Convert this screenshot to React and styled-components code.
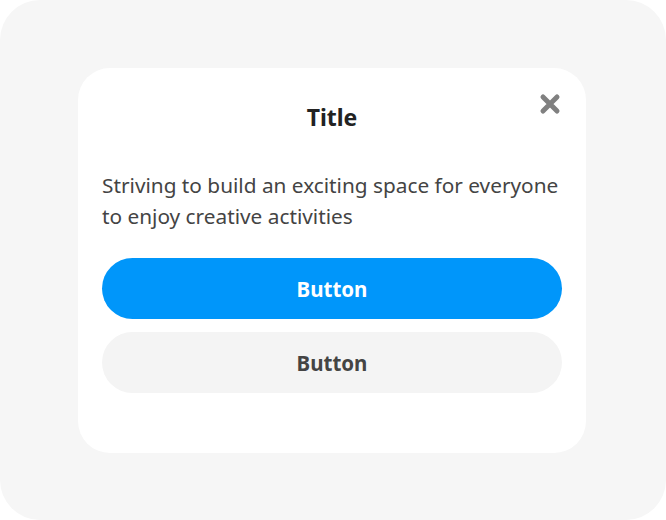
import React from "react";
import styled, { createGlobalStyle } from "styled-components";

const Global = createGlobalStyle`
  html, body {
    margin: 0;
    padding: 0;
    background: #ffffff;
  }
  * {
    box-sizing: border-box;
  }
`;

const Stage = styled.div`
  width: 666px;
  height: 520px;
  background: #f6f6f6;
  border-radius: 40px;
  padding: 68px 80px 67px 78px;
  font-family: "Noto Sans", "Open Sans", sans-serif;
`;

const Dialog = styled.div`
  width: 508px;
  height: 385px;
  background: #ffffff;
  border-radius: 32px;
  padding: 24px 24px 0;
  display: flex;
  flex-direction: column;
`;

const Header = styled.div`
  position: relative;
  height: 50px;
  display: flex;
  align-items: center;
  justify-content: center;
`;

const Title = styled.h2`
  margin: 0;
  font-size: 23px;
  font-weight: 700;
  color: #222222;
`;

const Close = styled.button`
  position: absolute;
  right: -1px;
  top: -1px;
  width: 26px;
  height: 26px;
  padding: 0;
  border: none;
  background: none;
  display: flex;
  align-items: center;
  justify-content: center;
  cursor: pointer;
`;

const Body = styled.p`
  margin: 28px 0 26px;
  font-size: 20.8px;
  line-height: 31px;
  color: #444444;
`;

const Actions = styled.div`
  display: flex;
  flex-direction: column;
  gap: 13px;
`;

const Button = styled.button`
  height: 61px;
  border: none;
  border-radius: 31px;
  font-family: inherit;
  font-size: 20.5px;
  font-weight: 700;
  cursor: pointer;
  background: ${(p) => (p.$primary ? "#0096fa" : "#f4f4f4")};
  color: ${(p) => (p.$primary ? "#ffffff" : "#444444")};
`;

const App = () => {
  return (
    <>
      <Global />
      <Stage>
        <Dialog>
          <Header>
            <Title>Title</Title>
            <Close aria-label="Close">
              <svg width="22" height="22" viewBox="0 0 22 22">
                <path
                  d="M4 4 L18 18 M18 4 L4 18"
                  stroke="#808080"
                  strokeWidth="5"
                  strokeLinecap="round"
                />
              </svg>
            </Close>
          </Header>
          <Body>
            Striving to build an exciting space for everyone to enjoy creative
            activities
          </Body>
          <Actions>
            <Button $primary>Button</Button>
            <Button>Button</Button>
          </Actions>
        </Dialog>
      </Stage>
    </>
  );
};

export default App;
